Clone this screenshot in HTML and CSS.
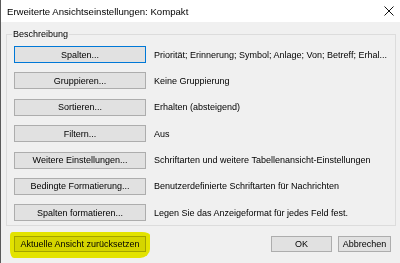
FILE: index.html
```html
<!DOCTYPE html>
<html lang="de">
  <head>
    <meta charset="UTF-8" />
    <meta name="viewport" content="width=device-width, initial-scale=1.0" />
    <title>Erweiterte Ansichtseinstellungen</title>
    <link rel="stylesheet" href="styles.css">
  </head>

  <body>
    <div class="titlebar">
      <span class="title">Erweiterte Ansichtseinstellungen: Kompakt</span>
      <svg class="close" width="10" height="10" viewBox="0 0 10 10">
        <path d="M0.5 0.5 L9.5 9.5 M9.5 0.5 L0.5 9.5" stroke="#111" stroke-width="1" fill="none" />
      </svg>
    </div>

    <div class="content">
      <fieldset class="group">
        <legend>Beschreibung</legend>
        <div class="rows">
          <button class="btn default">Spalten...</button>
          <span class="desc">Priorität; Erinnerung; Symbol; Anlage; Von; Betreff; Erhal...</span>

          <button class="btn">Gruppieren...</button>
          <span class="desc">Keine Gruppierung</span>

          <button class="btn">Sortieren...</button>
          <span class="desc">Erhalten (absteigend)</span>

          <button class="btn">Filtern...</button>
          <span class="desc">Aus</span>

          <button class="btn">Weitere Einstellungen...</button>
          <span class="desc">Schriftarten und weitere Tabellenansicht-Einstellungen</span>

          <button class="btn">Bedingte Formatierung...</button>
          <span class="desc">Benutzerdefinierte Schriftarten für Nachrichten</span>

          <button class="btn">Spalten formatieren...</button>
          <span class="desc">Legen Sie das Anzeigeformat für jedes Feld fest.</span>
        </div>
      </fieldset>

      <div class="footer">
        <div class="reset-wrap">
          <button class="btn reset">Aktuelle Ansicht zurücksetzen</button>
          <span class="marker"></span>
        </div>
        <div class="actions">
          <button class="btn ok">OK</button>
          <button class="btn cancel">Abbrechen</button>
        </div>
      </div>
    </div>
  </body>
</html>
```

FILE: styles.css
```css
body {
  margin: 0;
  background-color: #f0f0f0;
  font-family: "Liberation Sans", Arial, sans-serif;
  font-size: 9px;
  color: #000;
  border-left: 1px solid #5a5a5a;
  height: 263px;
  box-sizing: border-box;
  overflow: hidden;
}

.titlebar {
  display: flex;
  justify-content: space-between;
  align-items: center;
  height: 22px;
  padding: 0 6px 0 6px;
  background-color: #fff;
}

.title {
  font-size: 9.6px;
}

.content {
  padding: 7px 4px 0 5px;
}

.group {
  margin: 0;
  padding: 1px 7px 4px 7px;
  border: 1px solid #dcdcdc;
}

.group legend {
  margin-left: -2px;
  padding: 0 1px;
}

.rows {
  display: grid;
  grid-template-columns: 132px 1fr;
  column-gap: 8px;
  row-gap: 9.4px;
  align-items: center;
  margin-top: 6px;
}

.btn {
  height: 17px;
  padding: 0;
  background-color: #e1e1e1;
  border: 1px solid #adadad;
  border-radius: 0;
  font-family: inherit;
  font-size: 9px;
  color: #000;
}

.btn.default {
  border-color: #0078d7;
}

.desc {
  white-space: nowrap;
}

.footer {
  display: flex;
  justify-content: space-between;
  align-items: center;
  margin-top: 10px;
  padding: 0 5px 0 8px;
}

.reset-wrap {
  position: relative;
}

.reset {
  width: 132px;
  height: 16px;
}

.marker {
  position: absolute;
  left: -4px;
  top: -4px;
  right: -4px;
  bottom: -6px;
  background-color: #f2f200;
  mix-blend-mode: multiply;
  border-radius: 3px 8px 10px 4px / 4px 3px 9px 8px;
}

.actions {
  display: flex;
  gap: 6px;
}

.ok {
  width: 61px;
  height: 16px;
}

.cancel {
  width: 53px;
  height: 16px;
}
```
